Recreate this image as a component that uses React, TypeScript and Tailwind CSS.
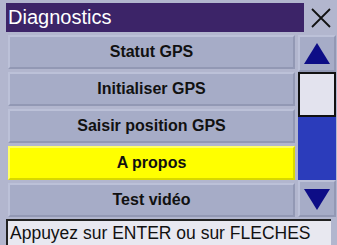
import React from 'react';

const ITEMS = ['Statut GPS', 'Initialiser GPS', 'Saisir position GPS', 'A propos', 'Test vidéo'];
const SELECTED = 3;

function Row({label, selected}: {label: string; selected: boolean}) {
  return (
    <div
      className={`h-[34px] flex items-center justify-center border-2 text-[16px] font-bold text-[#111] ${
        selected
          ? 'bg-[#ffff00] border-t-[#ffff66] border-l-[#ffff66] border-b-[#d8d800] border-r-[#d8d800]'
          : 'bg-[#a6acc7] border-t-[#bcc1d8] border-l-[#bcc1d8] border-b-[#9298b4] border-r-[#9298b4]'
      }`}
    >
      {label}
    </div>
  );
}

function ArrowButton({down}: {down?: boolean}) {
  return (
    <div className="h-[37px] flex items-center justify-center bg-[#a6acc7] border-2 border-t-[#bcc1d8] border-l-[#bcc1d8] border-b-[#9298b4] border-r-[#9298b4]">
      <svg width="28" height="24" viewBox="0 0 28 24">
        {down ? <polygon points="1,2 27,2 14,23" fill="#0d0d86" /> : <polygon points="14,1 27,22 1,22" fill="#0d0d86" />}
      </svg>
    </div>
  );
}

export default function App() {
  return (
    <div
      className="w-[337px] h-[245px] overflow-hidden bg-[#b2b6ce] flex flex-col pt-[3px] pl-[6px]"
      style={{fontFamily: '"Liberation Sans", Arial, sans-serif'}}
    >
      {/* Title bar */}
      <div className="flex h-[29px]">
        <div className="flex-1 bg-[#3c2468] text-white text-[20px] leading-[29px] pl-[2px]">Diagnostics</div>
        <div className="w-[33px] flex items-center justify-center">
          <svg width="22" height="22" viewBox="0 0 22 22">
            <path d="M2 2 L20 20 M20 2 L2 20" stroke="#111" strokeWidth="1.8" fill="none" />
          </svg>
        </div>
      </div>

      {/* List + scroll */}
      <div className="flex mt-[3px] h-[182px]">
        <div className="w-[287px] ml-[2px] flex flex-col gap-[3.5px]">
          {ITEMS.map((label, i) => (
            <Row key={label} label={label} selected={i === SELECTED} />
          ))}
        </div>
        <div className="w-[38px] ml-[3px] flex flex-col">
          <ArrowButton />
          <div className="h-[45px] bg-[#e3e3ee] border-2 border-[#111]" />
          <div className="flex-1 bg-[#2b3cbb]" />
          <ArrowButton down />
        </div>
      </div>

      {/* Status */}
      <div className="mt-[2px] w-[325px] flex-1 bg-[#e8e8f0] border-t-2 border-l-2 border-[#222] text-[17.5px] leading-[24px] pl-[2px] text-[#111]">
        Appuyez sur ENTER ou sur FLECHES
      </div>
    </div>
  );
}
